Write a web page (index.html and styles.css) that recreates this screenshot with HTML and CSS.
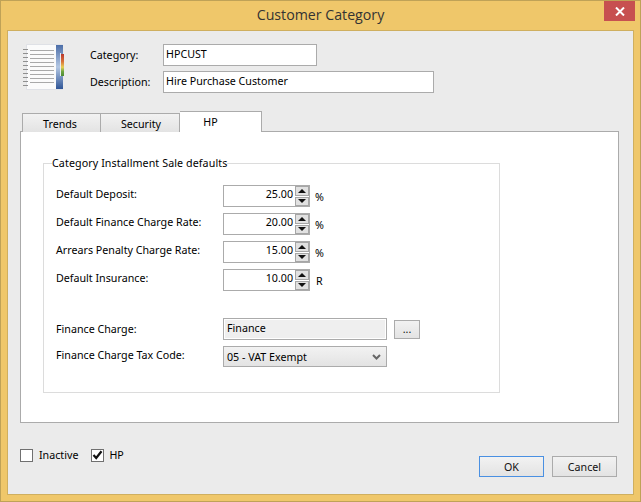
FILE: index.html
```html
<!DOCTYPE html>
<html lang="en">
<head>
<meta charset="utf-8">
<title>Customer Category</title>
<link rel="stylesheet" href="styles.css">
</head>
<body>
<div class="window">
  <div class="titlebar">
    <span class="title">Customer Category</span>
    <button class="close" aria-label="Close">
      <svg width="10" height="9" viewBox="0 0 10 9"><path d="M1 0.5 L9 8.5 M9 0.5 L1 8.5" stroke="#fff" stroke-width="2" fill="none"/></svg>
    </button>
  </div>
  <div class="client">
    <div class="head">
      <svg class="book" width="41" height="46" viewBox="0 0 41 46">
        <defs>
          <linearGradient id="spine" x1="0" y1="0" x2="0" y2="1">
            <stop offset="0" stop-color="#4c6ea8"/><stop offset=".5" stop-color="#b4c8e4"/><stop offset="1" stop-color="#2f5597"/>
          </linearGradient>
          <linearGradient id="tabs" x1="0" y1="0" x2="0" y2="1">
            <stop offset="0" stop-color="#b9372e"/><stop offset=".35" stop-color="#d9733a"/><stop offset=".6" stop-color="#e8cf55"/><stop offset=".8" stop-color="#6aa33f"/><stop offset="1" stop-color="#4d8a35"/>
          </linearGradient>
        </defs>
        <rect x="3" y="0" width="37" height="46" rx="1" fill="#dfe1e6"/>
        <rect x="4" y="1" width="29" height="44" fill="#fbfbfb"/>
        <rect x="33" y="1" width="7" height="44" fill="url(#spine)"/>
        <rect x="37" y="9" width="1" height="23" fill="#e9edf4"/>
        <rect x="38" y="10" width="3" height="22" fill="url(#tabs)"/>
        <path d="M7 6.500H31M7 10.500H31M7 14.500H31M7 18.500H31M7 22.500H31M7 26.500H31M7 30.500H31M7 34.500H31M7 38.500H31" stroke="#a9a9a9" fill="none"/>
        <path d="M0 5.500h5M0 9.500h5M0 13.500h5M0 17.500h5M0 21.500h5M0 25.500h5M0 29.500h5M0 33.500h5M0 37.500h5M0 41.500h5" stroke="#8f8f8f" stroke-width="1.200" fill="none"/>
      </svg>
      <div class="idfields">
        <label class="idlabel">Category:</label>
        <div class="box box-cat">HPCUST</div>
        <label class="idlabel">Description:</label>
        <div class="box box-desc">Hire Purchase Customer</div>
      </div>
    </div>

    <div class="tabs">
      <div class="tab tab-trends">Trends</div>
      <div class="tab tab-security">Security</div>
      <div class="tab tab-active">HP</div>
    </div>

    <div class="panel">
      <fieldset class="group">
        <legend>Category Installment Sale defaults</legend>
        <div class="rows">
          <label>Default Deposit:</label>
          <div class="spin"><span class="val">25.00</span><span class="arrows"><i class="up"></i><i class="down"></i></span></div>
          <span class="unit">%</span>

          <label>Default Finance Charge Rate:</label>
          <div class="spin"><span class="val">20.00</span><span class="arrows"><i class="up"></i><i class="down"></i></span></div>
          <span class="unit">%</span>

          <label>Arrears Penalty Charge Rate:</label>
          <div class="spin"><span class="val">15.00</span><span class="arrows"><i class="up"></i><i class="down"></i></span></div>
          <span class="unit">%</span>

          <label>Default Insurance:</label>
          <div class="spin"><span class="val">10.00</span><span class="arrows"><i class="up"></i><i class="down"></i></span></div>
          <span class="unit unit-r">R</span>
        </div>
        <div class="rows2">
          <label>Finance Charge:</label>
          <div class="box box-ro">Finance</div>
          <button class="btn-more">...</button>

          <label class="taxlabel">Finance Charge Tax Code:</label>
          <div class="select">
            <span>05 - VAT Exempt</span>
            <svg width="9" height="6" viewBox="0 0 9 6"><path d="M1 1 L4.500 4.500 L8 1" stroke="#666" stroke-width="2" fill="none"/></svg>
          </div>
        </div>
      </fieldset>
    </div>

    <div class="footer">
      <div class="checks">
        <span class="check"></span><span class="checklabel">Inactive</span>
        <span class="check check-on">
          <svg width="11" height="10" viewBox="0 0 11 10"><path d="M1.500 5 L4.200 8 L9.500 1.200" stroke="#111" stroke-width="2.200" fill="none"/></svg>
        </span><span class="checklabel checklabel-hp">HP</span>
      </div>
      <div class="buttons">
        <button class="btn btn-default">OK</button>
        <button class="btn">Cancel</button>
      </div>
    </div>
  </div>
</div>
</body>
</html>
```
FILE: styles.css
```css
* { box-sizing: border-box; }
html, body { margin: 0; padding: 0; }
body {
  width: 641px;
  height: 502px;
  overflow: hidden;
  font-family: "Noto Sans", "Open Sans", sans-serif;
  font-size: 10.7px;
  color: #000;
}
.window {
  width: 641px;
  height: 502px;
  background: #efc76a;
  border: 1px solid #bfa257;
  padding: 0 6px 6px 6px;
  display: flex;
  flex-direction: column;
}
.titlebar {
  height: 29px;
  flex: none;
  display: flex;
  justify-content: center;
  position: relative;
}
.title {
  font-family: "Open Sans", sans-serif;
  font-size: 14.2px;
  line-height: 28px;
  color: #333;
}
.close {
  position: absolute;
  right: -1px;
  top: 0;
  width: 31px;
  height: 20px;
  border: 0;
  padding: 0;
  background: #c75050;
  display: flex;
  align-items: center;
  justify-content: center;
}
.client {
  flex: 1;
  background: #ebebeb;
  border: 1px solid #cfaf5f;
  padding: 13px 14px 0 12px;
  display: flex;
  flex-direction: column;
}
.head {
  display: flex;
  height: 67px;
  flex: none;
}
.book { margin: 0 0 0 3px; flex: none; }
.idfields {
  margin-left: 26px;
  align-self: flex-start;
  display: grid;
  grid-template-columns: 73px auto;
  grid-auto-rows: 22px;
  row-gap: 5px;
  align-items: center;
  justify-items: start;
}
.idlabel { line-height: 22px; }
.box {
  height: 22px;
  border: 1px solid #ababab;
  background: #fff;
  padding: 0 2px;
  line-height: 19px;
  white-space: nowrap;
}
.box-cat { width: 154px; }
.box-desc { width: 271px; }
.tabs {
  display: flex;
  align-items: flex-end;
  height: 21px;
  flex: none;
  padding-left: 2px;
  position: relative;
  z-index: 1;
  margin-bottom: -1px;
}
.tab {
  height: 19px;
  border: 1px solid #ababab;
  border-bottom: 0;
  border-right: 0;
  background: linear-gradient(#f2f2f2, #e3e3e3);
  text-align: center;
  line-height: 21px;
}
.tab-trends { width: 78px; padding-right: 3px; }
.tab-security { width: 80px; border-right: 1px solid #ababab; padding-left: 2px; }
.tab-active {
  width: 82px;
  height: 21px;
  background: #fff;
  border-left: 0;
  border-right: 1px solid #ababab;
  line-height: 20px;
  padding-right: 20px;
}
.panel {
  width: 599px;
  height: 292px;
  flex: none;
  background: #fff;
  border: 1px solid #ababab;
  padding: 24px 0 0 22px;
}
.group {
  width: 457px;
  height: 237px;
  margin: 0;
  padding: 15px 0 0 12px;
  border: 1px solid #dcdcdc;
}
.group legend { padding: 0; margin-left: -4px; line-height: 14px; letter-spacing: 0.09px; }
.rows {
  display: grid;
  grid-template-columns: 167px 87px auto;
  grid-auto-rows: 22px;
  row-gap: 6px;
  align-items: center;
}
.rows > label { margin-top: -4px; }
.spin {
  height: 22px;
  border: 1px solid #ababab;
  background: #fff;
  display: flex;
  justify-content: flex-end;
  align-items: center;
}
.val { line-height: 18px; margin-top: -4px; padding-right: 2px; }
.arrows { display: flex; flex-direction: column; gap: 1px; width: 14px; height: 20px; }
.arrows i {
  flex: 1;
  background: #e1e1e1;
  border: 1px solid #a6a6a6;
  display: flex;
  align-items: center;
  justify-content: center;
}
.arrows i::after {
  content: "";
  width: 0;
  height: 0;
  border-left: 4px solid transparent;
  border-right: 4px solid transparent;
}
.up::after { border-bottom: 4px solid #111; }
.down::after { border-top: 4px solid #111; }
.unit { padding-left: 5px; padding-top: 2px; }
.unit-r { padding-left: 6px; }
.rows2 {
  margin-top: 27px;
  display: grid;
  grid-template-columns: 167px 164px auto;
  grid-template-rows: 22px 21px;
  row-gap: 6px;
  align-items: center;
}
.taxlabel { margin-top: -4px; }
.box-ro {
  background: #efefef;
  box-shadow: inset 0 0 0 1px #fff;
  padding-left: 3px;
  line-height: 19px;
}
.btn-more {
  margin-left: 7px;
  width: 26px;
  height: 19px;
  padding: 0;
  border: 1px solid #ababab;
  background: linear-gradient(#f2f2f2, #e3e3e3);
  font: inherit;
  color: #111;
  line-height: 14px;
}
.select {
  height: 21px;
  border: 1px solid #ababab;
  background: linear-gradient(#f2f2f2, #e3e3e3);
  display: flex;
  align-items: center;
  justify-content: space-between;
  padding: 0 5px 0 3px;
}
.footer {
  flex: 1;
  display: flex;
  justify-content: space-between;
  align-items: flex-start;
  padding-top: 24px;
}
.checks { display: flex; align-items: center; height: 16px; }
.check {
  width: 13px;
  height: 13px;
  border: 1px solid #707070;
  background: #fff;
  display: flex;
  align-items: center;
  justify-content: center;
}
.check-on { margin-left: 13px; }
.checklabel { margin-left: 6px; line-height: 14px; }
.checklabel-hp { margin-left: 5px; }
.buttons { display: flex; gap: 8px; margin-top: 9px; margin-right: 2px; }
.btn {
  width: 65px;
  height: 21px;
  padding: 0;
  border: 1px solid #ababab;
  background: linear-gradient(#f2f2f2, #e3e3e3);
  font: inherit;
  color: #111;
}
.btn-default { border-color: #4a90e2; }
```
